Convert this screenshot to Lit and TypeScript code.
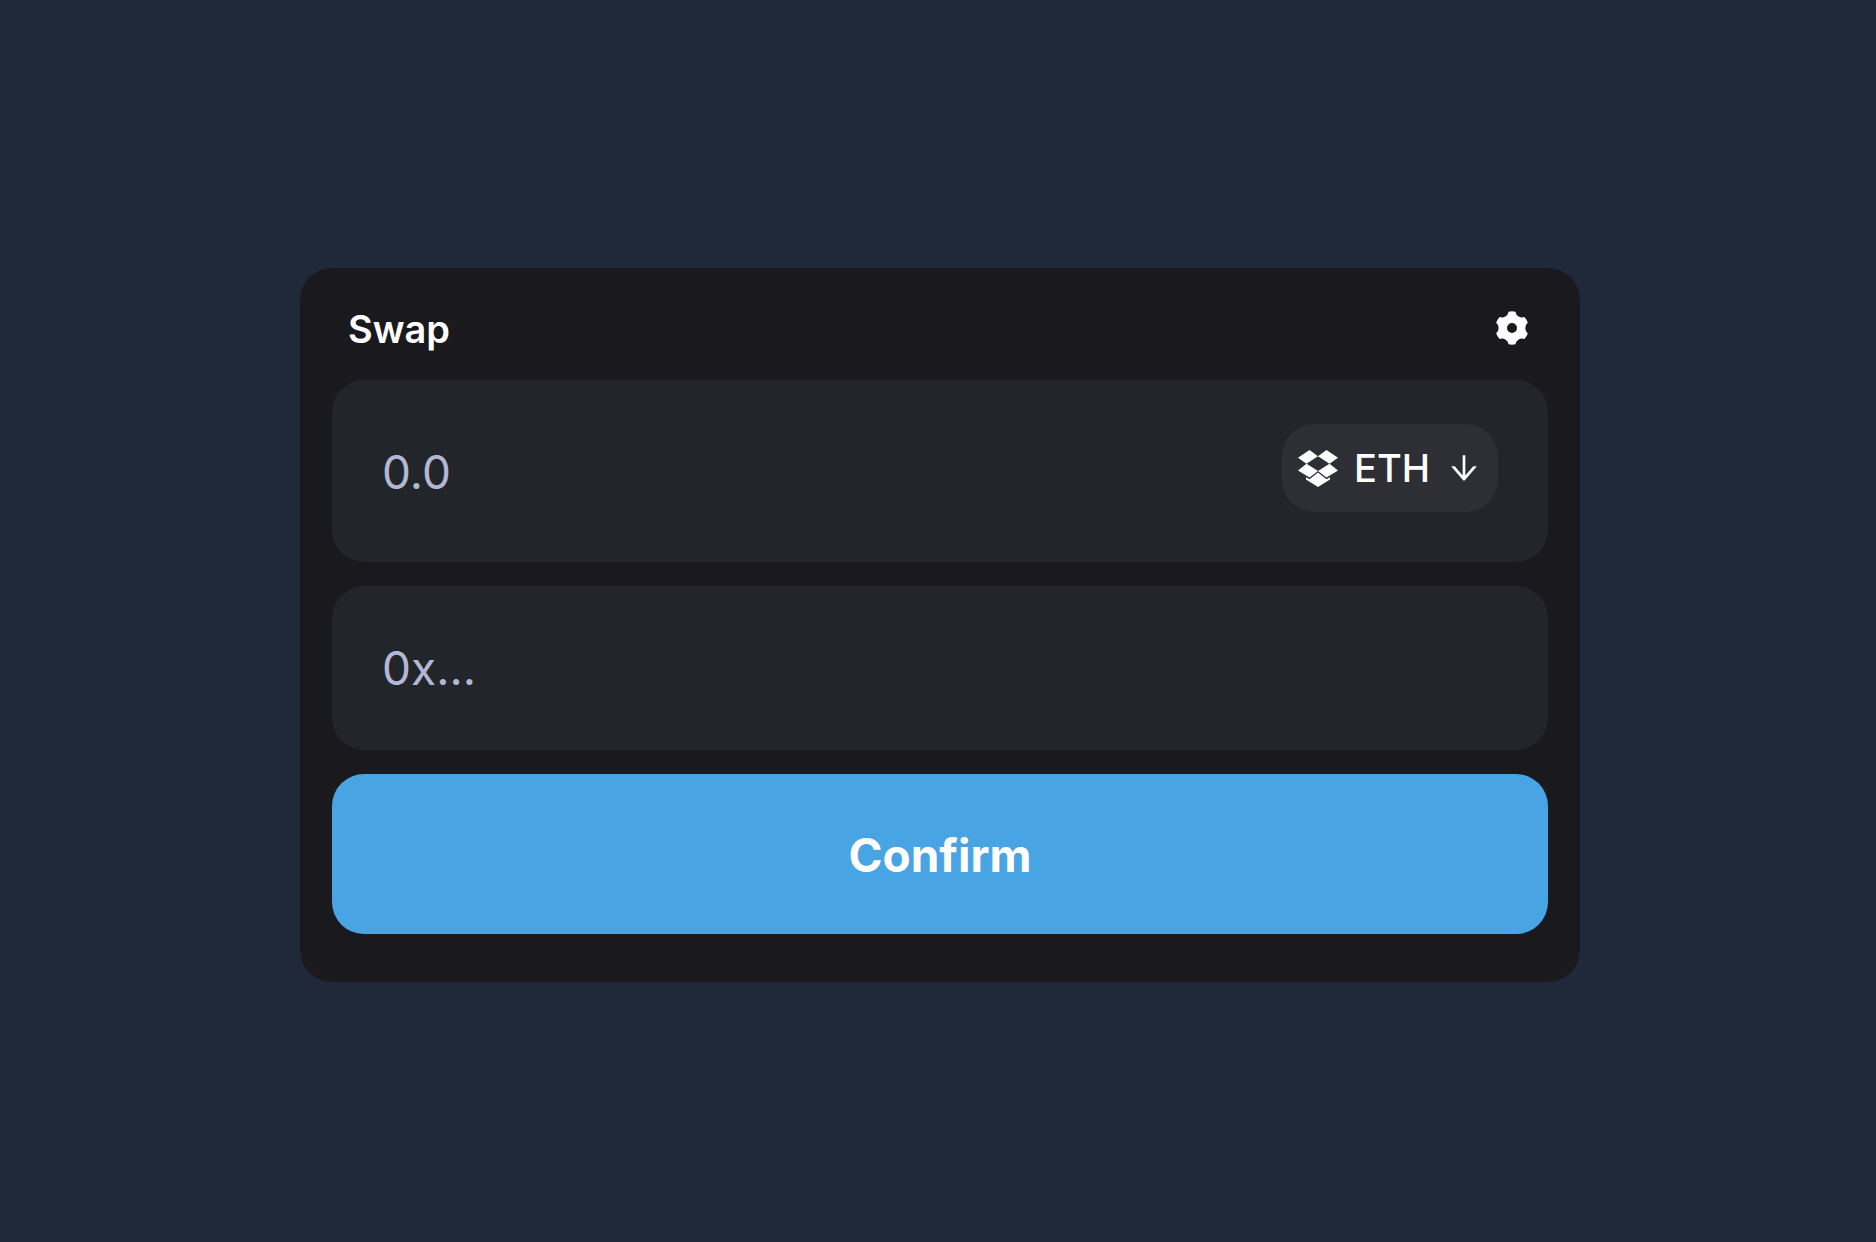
import { LitElement, html, css } from "lit";
import { customElement } from "lit/decorators.js";

@customElement("app-root")
export class AppRoot extends LitElement {
  static styles = css`
    :host {
      display: block;
      font-family: Inter, "Liberation Sans", sans-serif;
      color: #fff;
    }
    * { box-sizing: border-box; }
    .page {
      min-height: 100vh;
      padding: 8px 0 0 4px;
      display: flex;
      align-items: center;
      justify-content: center;
      background: #202939;
    }
    .card {
      width: 100%;
      max-width: 1280px;
      padding: 32px 32px 48px;
      border-radius: 32px;
      background: #1a191e;
      display: flex;
      flex-direction: column;
      gap: 24px;
    }
    .header {
      display: flex;
      align-items: center;
      justify-content: space-between;
      padding: 0 16px;
      height: 56px;
    }
    h1 {
      margin: 0;
      padding-top: 2px;
      font-size: 38px;
      line-height: 56px;
      font-weight: 600;
    }
    button, input {
      font: inherit;
      color: inherit;
      border: 0;
      margin: 0;
    }
    button { cursor: pointer; }
    svg { display: block; fill: currentColor; }
    .settings { padding: 0; background: none; }
    .row {
      display: flex;
      align-items: flex-start;
      padding: 44px 50px;
      border-radius: 32px;
      background: #222529;
    }
    .row.amount { padding-bottom: 42px; }
    .field {
      flex: 1;
      min-width: 0;
      padding: 0;
      height: 76px;
      font-size: 46px;
      background: transparent;
      outline: none;
    }
    .amount .field { height: 96px; }
    .field::placeholder { color: #b2b8d3; opacity: 1; }
    .token {
      display: flex;
      align-items: center;
      height: 88px;
      padding: 0 16px;
      border-radius: 32px;
      background: #2e2f34;
      font-size: 38px;
      font-weight: 500;
    }
    .token .name { margin: 0 16px; }
    .confirm {
      height: 160px;
      padding: 2px 0 0;
      border-radius: 32px;
      background: #49a4e4;
      font-size: 46px;
      font-weight: 700;
    }
  `;

  render() {
    return html`
      <main class="page">
        <form class="card" @submit=${(e: Event) => e.preventDefault()}>
          <header class="header">
            <h1>Swap</h1>
            <button class="settings" type="button" aria-label="Settings">
              <svg width="40" height="40" viewBox="0 0 24 24">
                <path d="M9.954 2.21a9.99 9.99 0 0 1 4.091-.002A3.993 3.993 0 0 0 16 5.07a3.993 3.993 0 0 0 3.457.261A9.99 9.99 0 0 1 21.5 8.876 3.993 3.993 0 0 0 20 12c0 1.264.586 2.391 1.502 3.124a10.043 10.043 0 0 1-2.046 3.543 3.993 3.993 0 0 0-3.456.261 3.993 3.993 0 0 0-1.954 2.86 9.99 9.99 0 0 1-4.091.004A3.993 3.993 0 0 0 8 18.927a3.993 3.993 0 0 0-3.457-.26A9.99 9.99 0 0 1 2.5 15.121 3.993 3.993 0 0 0 4 11.999a3.993 3.993 0 0 0-1.502-3.124 10.043 10.043 0 0 1 2.046-3.543A3.993 3.993 0 0 0 8 5.071a3.993 3.993 0 0 0 1.954-2.86zM12 15a3 3 0 1 0 0-6 3 3 0 0 0 0 6z" />
              </svg>
            </button>
          </header>
          <div class="row amount">
            <input class="field" type="text" placeholder="0.0" aria-label="Amount" />
            <button class="token" type="button">
              <svg width="40" height="40" viewBox="0 -2 40 40">
                <path d="M11.500 0 20 6.200 8.500 13.800 0 7.700zM28.500 0 40 7.700 31.500 13.800 20 6.200zM8.500 13.800 20 21 11.500 27.500 0 20.500zM31.500 13.800 40 20.500 28.500 27.500 20 21zM20 22.400 28.500 29.200 32 27.200V29.500L20 37 8 29.500V27.200L11.500 29.200z" />
              </svg>
              <span class="name">ETH</span>
              <svg width="36" height="36" viewBox="0 0 1024 1024">
                <path d="M862 465.300h-81c-4.600 0-9 2-12.100 5.500L550 723.100V160c0-4.400-3.600-8-8-8h-60c-4.400 0-8 3.600-8 8v563.100L255.100 470.800c-3-3.500-7.400-5.500-12.100-5.500h-81c-6.800 0-10.500 8.100-6 13.200L487.900 861a31.960 31.960 0 0 0 48.300 0L868 478.500c4.500-5.200.8-13.200-6-13.200z" />
              </svg>
            </button>
          </div>
          <div class="row address">
            <input class="field" type="text" placeholder="0x..." aria-label="Recipient address" />
          </div>
          <button class="confirm" type="submit">Confirm</button>
        </form>
      </main>
    `;
  }
}
